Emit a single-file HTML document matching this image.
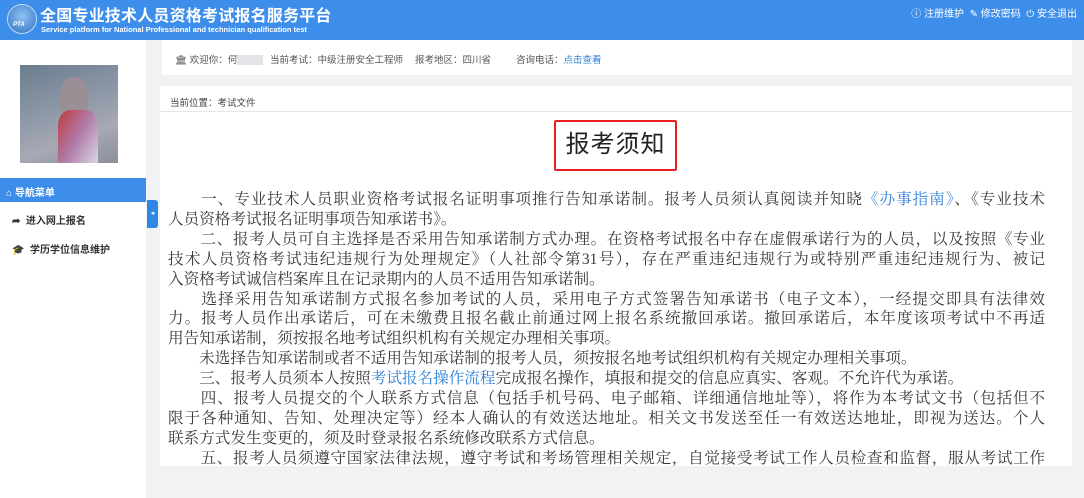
<!DOCTYPE html>
<html><head><meta charset="utf-8"><style>
*{margin:0;padding:0;box-sizing:border-box}
body{width:1084px;height:498px;overflow:hidden;background:#f1f2f4;font-family:"Liberation Sans","Noto Sans CJK SC",sans-serif;position:relative}
.hd{position:absolute;left:0;top:0;width:1084px;height:40px;background:#3d8deb;color:#fff}
.logo{position:absolute;left:7px;top:4px;width:30px;height:30px;border-radius:50%;background:radial-gradient(circle at 50% 40%,#8fc3f3,#2e6fbf);border:1px solid #bcdcfb}
.logo span{position:absolute;left:5px;top:17px;font-size:6px;font-weight:bold;font-style:italic}
.t1{position:absolute;left:40px;top:2px;font-size:16px;font-weight:bold;letter-spacing:0.2px}
.t2{position:absolute;left:41px;top:25px;font-size:7.5px;font-weight:bold}
.rt{position:absolute;right:7px;top:5px;font-size:10px}
.side{position:absolute;left:0;top:40px;width:146px;height:458px;background:#fff}
.av{position:absolute;left:20px;top:65px;width:98px;height:98px;background:linear-gradient(160deg,#6b7d8e 0%,#8a96a6 40%,#a7a9b4 70%,#8a8f9a 100%)}
.av i{position:absolute;left:40px;top:12px;width:28px;height:40px;border-radius:45% 45% 30% 30%;background:#9a8f95}
.av b{position:absolute;left:38px;top:45px;width:40px;height:53px;background:linear-gradient(120deg,#c03a3a,#b07aa8,#d9d6e4);border-radius:30% 30% 0 0}
.nav{position:absolute;left:0;top:178px;width:146px;height:24px;background:#3d8deb;color:#fff;font-size:10px;font-weight:bold;padding:6px 0 0 6px}
.it{position:absolute;left:12px;font-size:10px;font-weight:bold;color:#333}
.tab{position:absolute;left:147px;top:200px;width:11px;height:28px;background:#2f86e4;border-radius:0 3px 3px 0;color:#fff;font-size:7px;line-height:28px;text-align:center}
.info{position:absolute;left:162px;top:40px;width:910px;height:35px;background:#fff;font-size:9.5px;color:#555}
.info span{position:absolute;top:12px}
.main{position:absolute;left:160px;top:86px;width:912px;height:380px;background:#fff;overflow:hidden}
.bc{position:absolute;left:10px;top:9px;font-size:9.5px;color:#444}
.ln{position:absolute;left:0;top:25px;width:912px;height:1px;background:#e6e6e6}
.ttl{position:absolute;left:394px;top:34px;width:123px;height:51px;border:2px solid #e82020;border-radius:2px;font-size:24px;color:#222;text-align:center;line-height:46px;letter-spacing:1px}
.tx{position:absolute;left:8px;top:104px;width:877px;font-family:"Liberation Serif","Noto Serif CJK SC",serif;font-size:15.6px;line-height:19.9px;color:#3a3a3a}
.tx div{text-align:justify;text-align-last:justify;white-space:nowrap;overflow:hidden}
.tx div.n{text-align-last:left}
.tx a{color:#2f7fd8;text-decoration:none}
</style></head><body>
<div class="hd"><div class="logo"><span>PTA</span></div>
<div class="t1">全国专业技术人员资格考试报名服务平台</div>
<div class="t2">Service platform for National Professional and technician qualification test</div>
<div class="rt">ⓘ 注册维护 &nbsp;✎ 修改密码 &nbsp;⏻ 安全退出</div></div>
<div class="side"></div>
<div class="av"><i></i><b></b></div>
<div class="nav">⌂ 导航菜单</div>
<div class="it" style="top:212px">➦ &nbsp;进入网上报名</div>
<div class="it" style="top:241px">🎓 &nbsp;学历学位信息维护</div>
<div class="tab">◂</div>
<div class="info"><span style="left:13px">🏛 欢迎你：何<span style="position:static;display:inline-block;width:26px;height:10px;background:#e4e4e8;vertical-align:middle"></span></span>
<span style="left:108px">当前考试：中级注册安全工程师</span><span style="left:253px">报考地区：四川省</span>
<span style="left:354px">咨询电话：<b style="color:#2f7fd8;font-weight:normal">点击查看</b></span></div>
<div class="main">
<div class="bc">当前位置：考试文件</div><div class="ln"></div>
<div class="ttl">报考须知</div>
<div class="tx">
<div>　　一、专业技术人员职业资格考试报名证明事项推行告知承诺制。报考人员须认真阅读并知晓<a>《办事指南》</a>、《专业技术</div>
<div class="n">人员资格考试报名证明事项告知承诺书》。</div>
<div>　　二、报考人员可自主选择是否采用告知承诺制方式办理。在资格考试报名中存在虚假承诺行为的人员，以及按照《专业</div>
<div>技术人员资格考试违纪违规行为处理规定》（人社部令第31号），存在严重违纪违规行为或特别严重违纪违规行为、被记</div>
<div class="n">入资格考试诚信档案库且在记录期内的人员不适用告知承诺制。</div>
<div>　　选择采用告知承诺制方式报名参加考试的人员，采用电子方式签署告知承诺书（电子文本），一经提交即具有法律效</div>
<div>力。报考人员作出承诺后，可在未缴费且报名截止前通过网上报名系统撤回承诺。撤回承诺后，本年度该项考试中不再适</div>
<div class="n">用告知承诺制，须按报名地考试组织机构有关规定办理相关事项。</div>
<div class="n">　　未选择告知承诺制或者不适用告知承诺制的报考人员，须按报名地考试组织机构有关规定办理相关事项。</div>
<div class="n">　　三、报考人员须本人按照<a>考试报名操作流程</a>完成报名操作，填报和提交的信息应真实、客观。不允许代为承诺。</div>
<div>　　四、报考人员提交的个人联系方式信息（包括手机号码、电子邮箱、详细通信地址等），将作为本考试文书（包括但不</div>
<div>限于各种通知、告知、处理决定等）经本人确认的有效送达地址。相关文书发送至任一有效送达地址，即视为送达。个人</div>
<div class="n">联系方式发生变更的，须及时登录报名系统修改联系方式信息。</div>
<div>　　五、报考人员须遵守国家法律法规，遵守考试和考场管理相关规定，自觉接受考试工作人员检查和监督，服从考试工作</div>
</div></div>
</body></html>
